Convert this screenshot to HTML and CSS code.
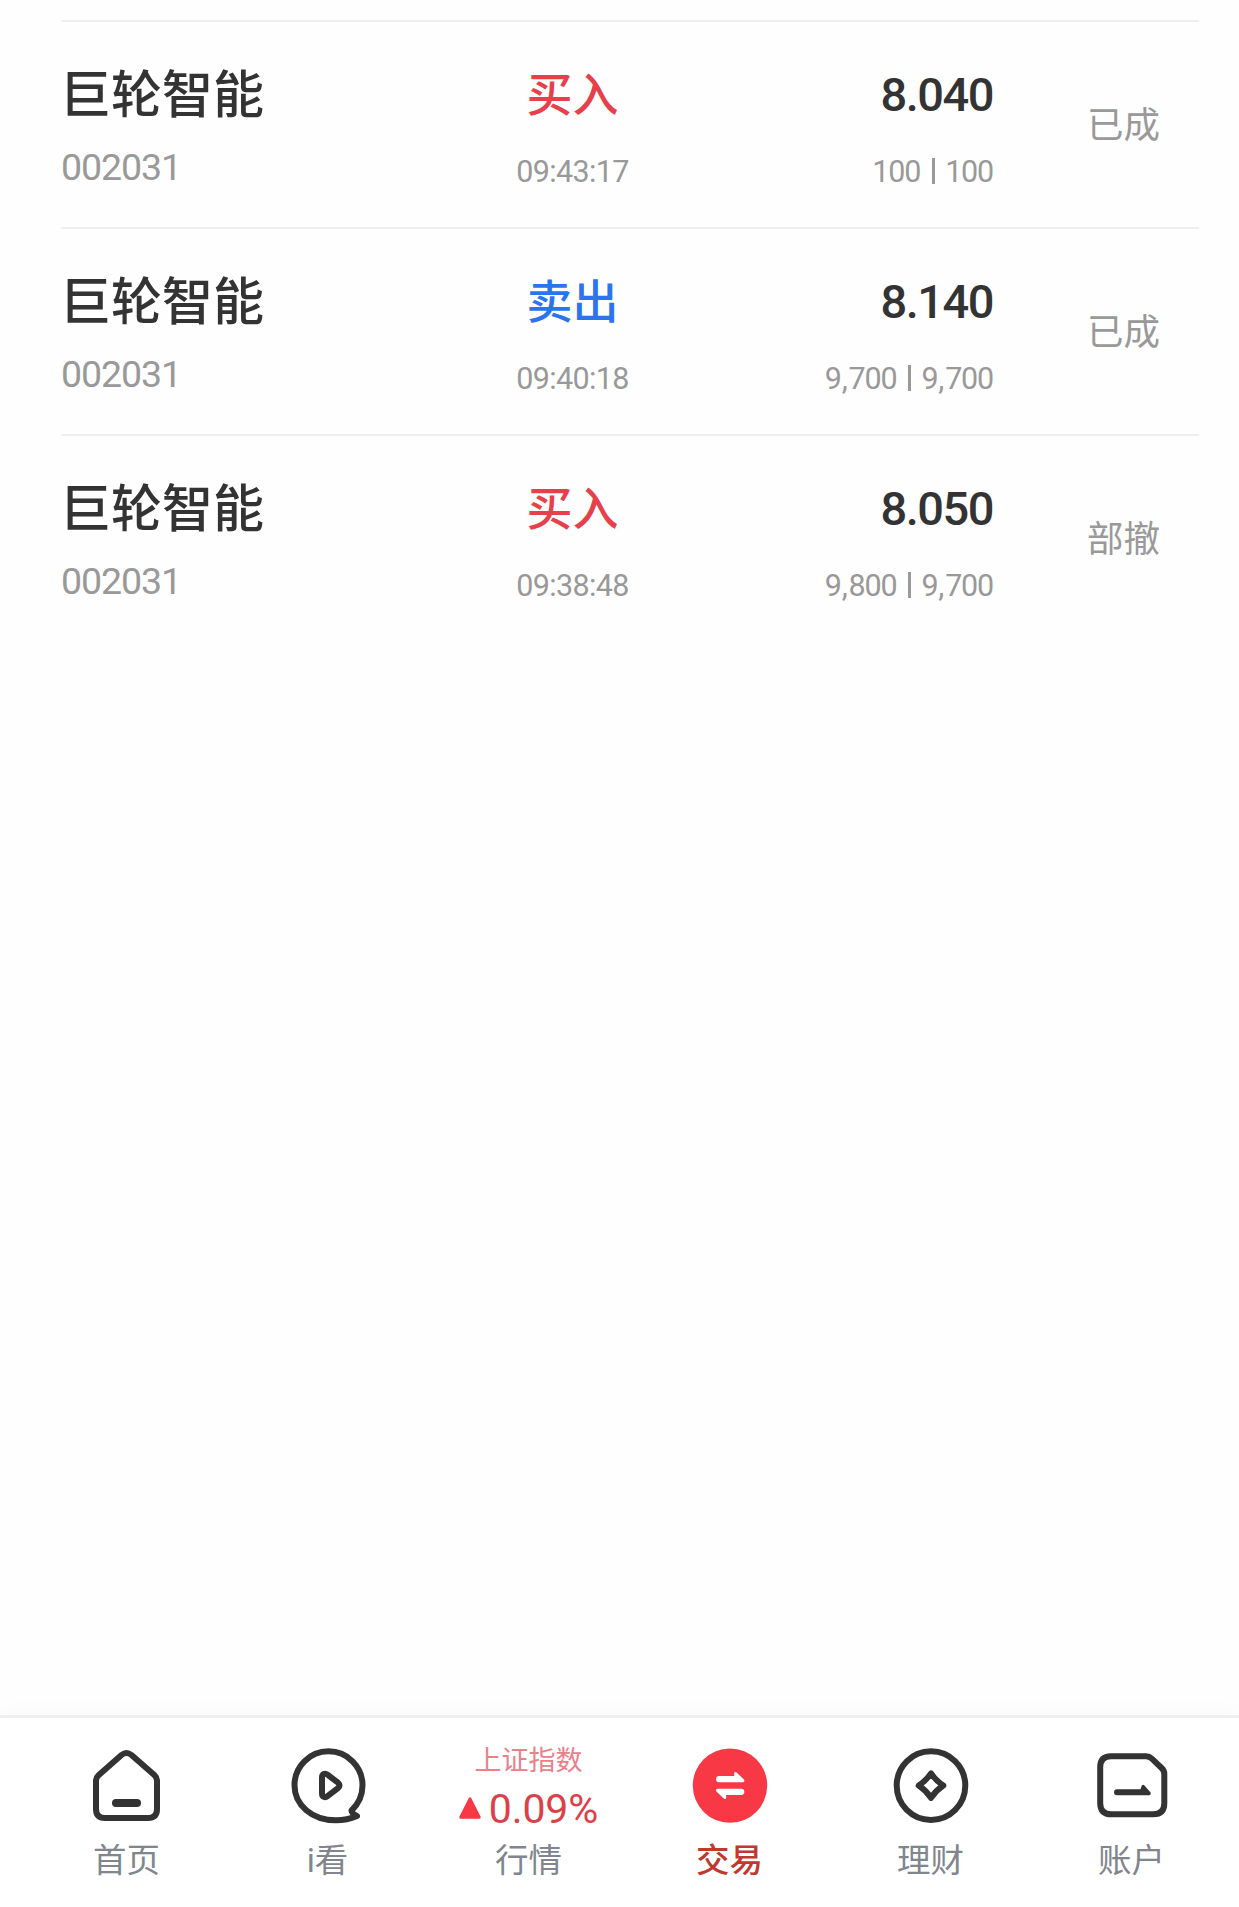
FILE: index.html
```html
<!DOCTYPE html>
<html lang="zh-CN">
<head>
<meta charset="utf-8">
<title>当日委托</title>
<link rel="stylesheet" href="styles.css">
</head>
<body>
<main class="orders">
  <article class="order">
    <div class="stock"><div class="name">巨轮智能</div><div class="code">002031</div></div>
    <div class="side"><div class="action buy">买入</div><div class="time">09:43:17</div></div>
    <div class="deal"><div class="price">8.040</div><div class="volume">100<i class="bar"></i>100</div></div>
    <div class="status">已成</div>
  </article>
  <article class="order">
    <div class="stock"><div class="name">巨轮智能</div><div class="code">002031</div></div>
    <div class="side"><div class="action sell">卖出</div><div class="time">09:40:18</div></div>
    <div class="deal"><div class="price">8.140</div><div class="volume">9<span class="sep">,</span>700<i class="bar"></i>9<span class="sep">,</span>700</div></div>
    <div class="status">已成</div>
  </article>
  <article class="order">
    <div class="stock"><div class="name">巨轮智能</div><div class="code">002031</div></div>
    <div class="side"><div class="action buy">买入</div><div class="time">09:38:48</div></div>
    <div class="deal"><div class="price">8.050</div><div class="volume">9<span class="sep">,</span>800<i class="bar"></i>9<span class="sep">,</span>700</div></div>
    <div class="status">部撤</div>
  </article>
</main>
<nav class="tabs">
  <a class="tab">
    <svg class="icon" viewBox="0 0 84 84"><path d="M11 66V38Q11 34.5 13.8 32L36.5 12Q41.5 8 46.5 12L69.3 32Q72 34.5 72 38V66Q72 75 63 75H20Q11 75 11 66Z"/><path class="dash" d="M31 60H52"/></svg>
    <span class="label">首页</span>
  </a>
  <a class="tab">
    <svg class="icon" viewBox="0 0 84 84"><path d="M65.5 67.5C72.5 61 76.5 52 76.5 42.3A34 34 0 1 0 8.5 42.3C8.5 62 26 77.3 50 77.3C58 77.3 64 76 71 73Q66 71 65.5 67.5Z"/><path d="M36 34.5C36 31 39 29.7 41.5 31.7L52 39.7Q55 42.4 52 45.1L41.5 53.1C39 55.1 36 54 36 50.5Z"/></svg>
    <span class="label">i看</span>
  </a>
  <a class="tab">
    <span class="quote">
      <span class="index">上证指数</span>
      <span class="change"><svg class="up" viewBox="0 0 22 22"><path d="M11 1.8L20.2 20.2H1.8Z"/></svg>0.09%</span>
    </span>
    <span class="label">行情</span>
  </a>
  <a class="tab active">
    <svg class="icon" viewBox="0 0 84 84"><circle class="disc" cx="42" cy="42.6" r="37.2"/><path class="arrows" d="M31.2 33H46.2V30.2Q46.6 28.2 48.6 29.6L56 36.6Q57.2 39.3 54.5 39.3H31.2A3.1 3.1 0 0 1 31.2 33ZM53.2 52H38.2V54.8Q37.8 56.8 35.8 55.4L28.4 48.4Q27.2 45.7 29.9 45.7H53.2A3.1 3.1 0 0 1 53.2 52Z"/></svg>
    <span class="label">交易</span>
  </a>
  <a class="tab">
    <svg class="icon" viewBox="0 0 84 84"><circle cx="42" cy="42.6" r="34.3"/><path d="M42 30.3Q46.9 37.7 54.3 42.6Q46.9 47.5 42 54.9Q37.1 47.5 29.7 42.6Q37.1 37.7 42 30.3Z"/></svg>
    <span class="label">理财</span>
  </a>
  <a class="tab">
    <svg class="icon" viewBox="0 0 84 84"><path d="M21 13.3H56Q59.3 13.3 61.8 15.6L71.6 25Q74.3 27.5 74.3 31V60.3Q74.3 71.3 63.3 71.3H21Q10.2 71.3 10.2 60.3V24.3Q10.2 13.3 21 13.3Z"/><path class="solid" d="M27 46.3H50.5L51.8 42.6Q53 41 54.5 42.4L60.6 49.6Q61.3 52.3 58.8 52.3H27A3 3 0 0 1 27 46.3Z"/></svg>
    <span class="label">账户</span>
  </a>
</nav>
</body>
</html>
```
FILE: styles.css
```css
* { box-sizing: border-box; }
body {
  margin: 0;
  height: 1907px;
  display: flex;
  flex-direction: column;
  background: #fefefe;
  color: #333;
  font-family: Roboto, "Noto Sans CJK SC", sans-serif;
}
.orders {
  flex: 1;
  padding: 20px 40px 0 61px;
}
.order {
  height: 207px;
  border-top: 2px solid #eee;
  display: grid;
  grid-template-columns: 393px 237px 302px 55px 151px;
}
.name, .code, .action, .time, .price, .volume { white-space: nowrap; }
.name {
  margin: 44px 0 0 -1px;
  line-height: 60px;
  font-size: 51px;
  font-weight: 500;
}
.code {
  margin-top: 19px;
  line-height: 44px;
  font-size: 37.5px;
  letter-spacing: -1.1px;
  color: #999;
}
.side { text-align: center; }
.action {
  margin-top: 43px;
  line-height: 60px;
  font-size: 46px;
  font-weight: 500;
}
.buy { color: #e6404b; }
.sell { color: #2b74ee; }
.time, .volume {
  margin-top: 27px;
  line-height: 40px;
  font-size: 30.5px;
  letter-spacing: -0.65px;
  color: #999;
}
.deal { text-align: right; }
.price {
  margin-top: 43px;
  line-height: 60px;
  font-size: 47px;
  font-weight: 500;
  letter-spacing: -1.5px;
}
.volume { letter-spacing: -1.2px; }
.sep { margin: 0 2px 0 1px; }
.bar {
  display: inline-block;
  width: 3px;
  height: 26px;
  margin: 0 10px 0 12px;
  vertical-align: -2px;
  background: #999;
}
.status {
  grid-column: 5;
  margin-top: 79px;
  line-height: 50px;
  font-size: 36.5px;
  text-align: center;
  color: #999;
}
.tabs {
  height: 192px;
  border-top: 3px solid #efefef;
  box-shadow: 0 -4px 18px rgba(0, 0, 0, 0.025);
  padding: 25px 7px 0 26px;
  display: grid;
  grid-template-columns: repeat(6, 201px);
  background: #fff;
}
.tab {
  display: flex;
  flex-direction: column;
  align-items: center;
}
.icon {
  width: 84px;
  height: 84px;
  fill: none;
  stroke: #333;
  stroke-width: 6;
  stroke-linecap: round;
  stroke-linejoin: round;
}
.dash { stroke-width: 8; }
.solid { fill: #333; stroke: none; }
.disc { fill: #f83845; stroke: none; }
.arrows { fill: #fff; stroke: none; }
.label {
  margin-top: 9px;
  line-height: 50px;
  font-size: 33.5px;
  color: #80858e;
}
.active .label { color: #c0392f; font-weight: 500; }
.quote {
  height: 84px;
  display: flex;
  flex-direction: column;
  align-items: center;
}
.index {
  margin-top: 1px;
  line-height: 34px;
  font-size: 27px;
  color: #e9808a;
}
.change {
  display: flex;
  align-items: center;
  gap: 8px;
  margin-top: 7px;
  line-height: 48px;
  font-size: 41px;
  letter-spacing: -0.1px;
  color: #dc4049;
}
.up {
  width: 22px;
  height: 22px;
  margin-top: -2px;
  fill: #f83845;
  stroke: #f83845;
  stroke-width: 3;
  stroke-linejoin: round;
}
```
